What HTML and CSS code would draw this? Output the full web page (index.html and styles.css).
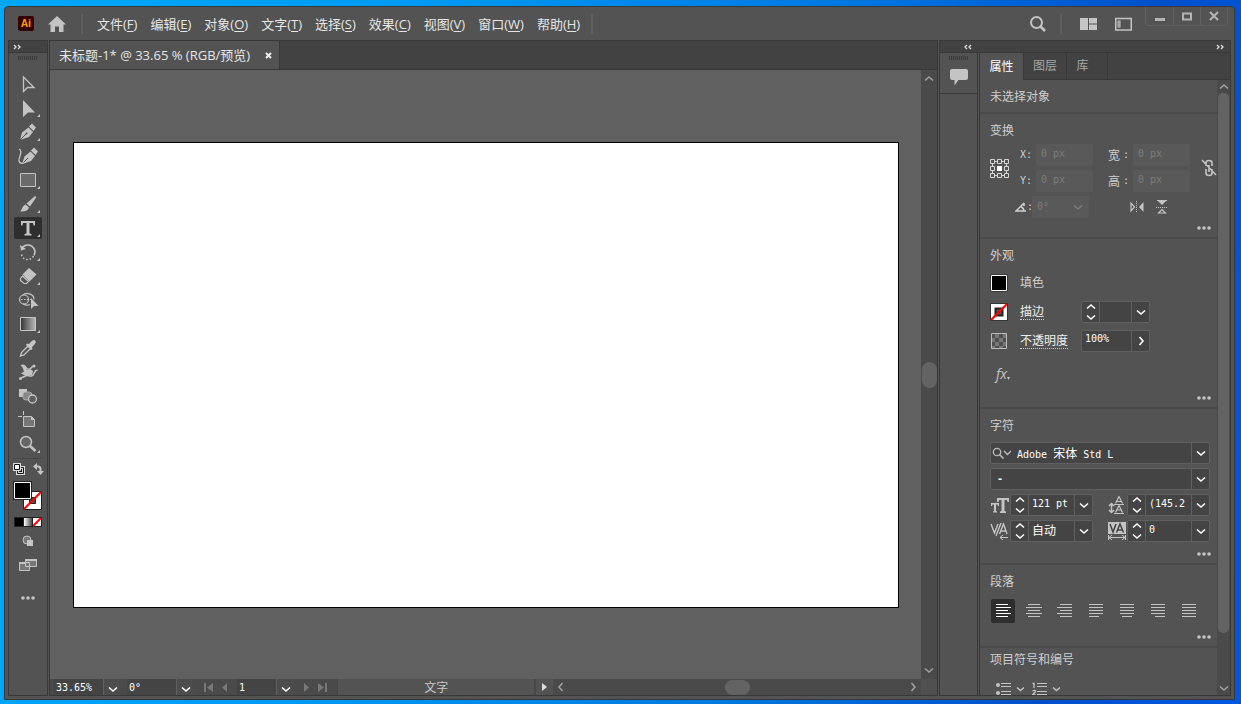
FILE: index.html
```html
<!DOCTYPE html>
<html lang="zh-CN">
<head>
<meta charset="utf-8">
<title>未标题-1*</title>
<link rel="stylesheet" href="styles.css">
</head>
<body>
<svg class="sprite" aria-hidden="true">
  <symbol id="down" viewBox="0 0 10 8"><path d="M1 2.500l4 3.500 4-3.500" fill="none" stroke="currentColor" stroke-width="1.600"/></symbol>
  <symbol id="up" viewBox="0 0 10 8"><path d="M1 5.500l4-3.500 4 3.500" fill="none" stroke="currentColor" stroke-width="1.600"/></symbol>
  <symbol id="right" viewBox="0 0 8 10"><path d="M2.500 1l3.500 4-3.500 4" fill="none" stroke="currentColor" stroke-width="1.600"/></symbol>
  <symbol id="left" viewBox="0 0 8 10"><path d="M5.500 1L2 5l3.500 4" fill="none" stroke="currentColor" stroke-width="1.600"/></symbol>
  <symbol id="dots" viewBox="0 0 14 4"><circle cx="2" cy="2" r="1.8"/><circle cx="7" cy="2" r="1.8"/><circle cx="12" cy="2" r="1.8"/></symbol>
  <symbol id="expand" viewBox="0 0 8 6"><path d="M1 1L3 3 1 5M5 1L7 3 5 5" fill="none" stroke="currentColor" stroke-width="1.300"/></symbol>
  <symbol id="collapse" viewBox="0 0 8 6"><path d="M3 1L1 3l2 2M7 1L5 3l2 2" fill="none" stroke="currentColor" stroke-width="1.300"/></symbol>
</svg>

<div class="window">
  <header class="titlebar">
    <svg class="logo" width="16" height="15" viewBox="0 0 16 15"><rect width="16" height="15" rx="2" fill="#330000"/><text x="8" y="11" text-anchor="middle" class="logo-text">Ai</text></svg>
    <button class="plain home" aria-label="主页"><svg width="18" height="16" viewBox="0 0 18 16"><path d="M9 0L18 8.500H15.500V16H11V10.500H7V16H2.500V8.500H0z"/></svg></button>
    <span class="divider"></span>
    <nav class="menu">
      <button>文件(<u>F</u>)</button><button>编辑(<u>E</u>)</button><button>对象(<u>O</u>)</button><button>文字(<u>T</u>)</button><button>选择(<u>S</u>)</button><button>效果(<u>C</u>)</button><button>视图(<u>V</u>)</button><button>窗口(<u>W</u>)</button><button>帮助(<u>H</u>)</button>
    </nav>
    <span class="divider"></span>
    <div class="title-tools">
      <button class="plain" aria-label="搜索"><svg width="18" height="18" viewBox="0 0 18 18" fill="none" stroke="currentColor"><circle cx="7.500" cy="7.500" r="5.500" stroke-width="2"/><path d="M11.500 11.500L16 16" stroke-width="2.600"/></svg></button>
      <span class="divider"></span>
      <button class="plain layout-button" aria-label="排列文档"><svg width="17" height="12" viewBox="0 0 17 12"><path d="M0 0h8v12H0zM9 0h8v5.500H9zM9 6.500h8V12H9z"/></svg></button>
      <button class="plain" aria-label="工作区"><svg width="17" height="14" viewBox="0 0 17 14"><path d="M.75 1.500h15.500v11.500H.75z" fill="none" stroke="currentColor" stroke-width="1.500"/><path d="M2.500 3.500h3v7h-3z"/><path d="M3.500 5h1M3.500 7h1M3.500 9h1" stroke="#535353"/></svg></button>
    </div>
    <div class="window-buttons">
      <button aria-label="最小化"><svg width="12" height="10" viewBox="0 0 12 10"><path d="M1 7h10v3H1z"/></svg></button>
      <button aria-label="最大化"><svg width="12" height="10" viewBox="0 0 12 10"><path d="M2 2.500h8v6H2z" fill="none" stroke="currentColor" stroke-width="2"/></svg></button>
      <button aria-label="关闭"><svg width="12" height="10" viewBox="0 0 12 10"><path d="M2 1l8 8M10 1L2 9" stroke="currentColor" stroke-width="2"/></svg></button>
    </div>
  </header>

  <div class="workspace">
    <aside class="toolbar">
      <div class="toolbar-head"><svg width="8" height="6"><use href="#expand"/></svg></div>
      <div class="grip"></div>
      <div class="tools">
        <button aria-label="选择"><svg viewBox="0 0 28 22"><path d="M9.500 4V18.500L13.500 14.500H20z" fill="none" stroke="currentColor" stroke-width="1.300"/></svg></button>
        <button aria-label="直接选择"><svg viewBox="0 0 28 22"><path d="M9 3V20l5-4.500h7z"/><path d="M26 17v3h-3z"/></svg></button>
        <button aria-label="钢笔"><svg viewBox="0 0 28 22"><path d="M6 19L8 11.500 14.500 6.500 19 11 15 16z"/><path d="M15 5.500L18 2.500 22 6.500 19.500 10z"/><path d="M6 19l6-6" stroke="#535353"/><circle cx="12.500" cy="12.500" r="1" fill="#535353"/><path d="M26 17v3h-3z"/></svg></button>
        <button aria-label="曲率"><svg viewBox="0 0 28 22"><path d="M8 19L10.500 11.500 16.500 6.500 21 11 17 16z"/><path d="M17 5.500L20 2.500 24 6.500 21.500 10z"/><path d="M9 18l5-5" stroke="#535353"/><path d="M5 4C10 6 4 13 5 16q1 4 7 1" fill="none" stroke="currentColor" stroke-width="1.300"/></svg></button>
        <button aria-label="矩形"><svg viewBox="0 0 28 22"><path d="M6.500 4.500h15v13h-15z" fill="#6b6b6b" stroke="currentColor"/><path d="M26 17v3h-3z"/></svg></button>
        <button aria-label="画笔"><svg viewBox="0 0 28 22"><path d="M21 3l1.500 1L16 13.500l-3.500-3z"/><path d="M11.500 11.500l3.500 3c-.8 3-4 4.500-9 4 2-1 2-5.500 5.500-7z"/><path d="M26 17v3h-3z"/></svg></button>
        <button class="active" aria-label="文字"><svg viewBox="0 0 28 22"><path d="M7 4h14v4.500h-1.500L19 6h-3.500v10.500l2 .5v1.500h-7V17l2-.5V6H9l-.5 2.500H7z"/><path d="M26 17v3h-3z"/></svg></button>
        <button aria-label="旋转"><svg viewBox="0 0 28 22"><path d="M8 7C11 3 17 3 20 7.500c1.500 2.500 1 5 0 7" fill="none" stroke="currentColor" stroke-width="1.500"/><path d="M6 4l1 5.500 5-1.500z"/><path d="M7.500 13.500C9 20 17 20 19.500 15" fill="none" stroke="currentColor" stroke-width="1.500" stroke-dasharray="1.500 2"/><path d="M26 17v3h-3z"/></svg></button>
        <button aria-label="橡皮擦"><svg viewBox="0 0 28 22"><path d="M15 3l7.500 6.500-7 7L8.500 9.500z"/><path d="M8.500 11L6.500 13.500v2l3.500 3h2.500l2-2z" fill="none" stroke="currentColor" stroke-width="1.200"/><path d="M26 17v3h-3z"/></svg></button>
        <button aria-label="形状生成器"><svg viewBox="0 0 28 22"><circle cx="10" cy="10.500" r="4.500" fill="none" stroke="currentColor" stroke-width="1.200"/><path d="M9 6c3-3 11-1.500 11 4.500M9 15q4 2 7 .5" fill="none" stroke="currentColor" stroke-width="1.200"/><path d="M7 10.500h10" stroke="currentColor" stroke-dasharray="1.500 1.500"/><path d="M17 9v11l3-3h4.500z"/></svg></button>
        <button aria-label="渐变"><svg viewBox="0 0 28 22"><defs><linearGradient id="g"><stop stop-color="#333"/><stop offset="1" stop-color="#bbb"/></linearGradient></defs><path d="M6.500 4.500h15v13h-15z" fill="url(#g)" stroke="currentColor"/><path d="M26 17v3h-3z"/></svg></button>
        <button aria-label="吸管"><svg viewBox="0 0 28 22"><path d="M14.500 8.500l-7 7-1 3.500 3.500-1 7-7" fill="none" stroke="currentColor" stroke-width="1.400"/><path d="M13 6.500l2 .5c2-2 3-4 5.500-4 2 1 1.500 3 0 4.500L18 10l.5 2-1.500 1-5-5z"/></svg></button>
        <button aria-label="操控变形"><svg viewBox="0 0 28 22"><path d="M7 5q3-2 5 1.500c1 2 2 2 4 1.500l3-3M23.500 9.500c-3-1.500-3 5-6 5.500-3 .5-4-1.500-6 0L7 17" fill="none" stroke="currentColor" stroke-width="1.500"/><path d="M7 4q5 1 6 5l4-.5 2 1.500-1 4-7 .5-4-2 3-2q-1-4-3-6.500z"/><circle cx="6.500" cy="17.500" r="1.500"/><circle cx="20" cy="5" r="1.500"/></svg></button>
        <button aria-label="混合"><svg viewBox="0 0 28 22"><path d="M5 4h8v8H5z"/><rect x="9" y="7" width="9" height="8" rx="3" fill="#888" stroke="#aaa"/><circle cx="18.500" cy="14" r="4" fill="#606060" stroke="currentColor" stroke-width="1.300"/></svg></button>
        <button aria-label="画板"><svg viewBox="0 0 28 22"><path d="M9.500 7.500h8l3 3v7h-11z" fill="#777" stroke="currentColor"/><path d="M9.500 2v4M4 7.500h4" stroke="currentColor"/><path d="M17 7l4 4h-4z"/></svg></button>
        <button aria-label="缩放"><svg viewBox="0 0 28 22"><circle cx="12" cy="9" r="5.500" fill="#666" stroke="currentColor" stroke-width="1.500"/><path d="M16 13l5.500 5" stroke="currentColor" stroke-width="2.500"/><path d="M26 17v3h-3z"/></svg></button>
      </div>
      <button class="plain" aria-label="填色和描边"><svg width="34" height="74" viewBox="0 0 34 74">
        <path d="M2 2.500h30" stroke="#484848"/>
        <path d="M6.500 11.500h6v6h-6z" fill="#111" stroke="#ddd" stroke-width="3"/><path d="M6.500 11.500h6v6h-6z" fill="none" stroke="#111"/><path d="M2.500 7.500h7v7h-7z" fill="#fff" stroke="#ddd"/><path d="M3.500 8.500h5v5h-5z" fill="#fff" stroke="#111"/>
        <path d="M25 10.500h2q2.500 0 2.500 2.500v4" fill="none" stroke="currentColor" stroke-width="2"/><path d="M22 10.500l4-3.500v7zM26 15h7l-3.500 4z"/>
        <path d="M12.500 35.500h18v18h-18z" fill="#fff" stroke="#222"/><path d="M18.500 41.500h6v6h-6z" fill="#535353" stroke="#222"/><path d="M13 53L30 36" stroke="#f00" stroke-width="2"/>
        <path d="M2.500 25.500h18v18h-18z" fill="#000" stroke="#222"/><path d="M3.500 26.500h16v16h-16z" fill="#000" stroke="#fff"/>
        <path d="M3 61h28v10H3z" fill="#222"/><path d="M4 62h8v8H4z" fill="#000"/><path d="M13 62h8v8h-8z" fill="url(#sg)"/><path d="M22 62h8v8h-8z" fill="#fff"/><path d="M22 70l8-8" stroke="#f00" stroke-width="2"/>
        <defs><linearGradient id="sg"><stop stop-color="#fff"/><stop offset="1" stop-color="#444"/></linearGradient></defs>
      </svg></button>
      <button class="plain mode" aria-label="绘图模式"><svg width="12" height="12" viewBox="0 0 12 12"><circle cx="5" cy="5" r="4" fill="#777" stroke="currentColor"/><path d="M5 5h6v6H5z"/></svg></button>
      <button class="plain screen" aria-label="屏幕模式"><svg width="18" height="14" viewBox="0 0 18 14"><path d="M.5 4.500h10v8H.5zM6.500 1.500h11v7h-11z" fill="#777" stroke="currentColor"/><path d="M6 1h12v2H6zM0 4h6v2H0z"/></svg></button>
      <button class="plain more-tools" aria-label="编辑工具栏"><svg width="14" height="4"><use href="#dots"/></svg></button>
    </aside>

    <main class="document">
      <div class="tabs"><div class="tab"><span>未标题-1* @ 33.65 % (RGB/预览)</span><button class="plain" aria-label="关闭标签"><svg width="7" height="7" viewBox="0 0 7 7"><path d="M1 1l5 5M6 1L1 6" stroke="#eee" stroke-width="2"/></svg></button></div></div>
      <div class="view">
        <div class="canvas"><div class="artboard"></div></div>
        <div class="scroll vertical"><svg width="10" height="8"><use href="#up"/></svg><span class="thumb"></span><svg width="10" height="8"><use href="#down"/></svg></div>
      </div>
      <footer class="status">
        <div class="status-combo"><input value="33.65%" aria-label="缩放比例"><button aria-label="缩放列表"><svg width="10" height="8"><use href="#down"/></svg></button></div>
        <div class="status-combo"><input value="0°" aria-label="旋转视图"><button aria-label="旋转列表"><svg width="10" height="8"><use href="#down"/></svg></button></div>
        <div class="pager"><button class="plain" aria-label="首项"><svg width="9" height="9" viewBox="0 0 9 9"><path d="M0 0h2v9H0zM9 0v9L3 4.500z"/></svg></button><button class="plain" aria-label="上一项"><svg width="5" height="9" viewBox="0 0 5 9"><path d="M5 0v9L0 4.500z"/></svg></button></div>
        <div class="status-combo short"><input value="1" aria-label="画板"><button aria-label="画板列表"><svg width="10" height="8"><use href="#down"/></svg></button></div>
        <div class="pager"><button class="plain" aria-label="下一项"><svg width="5" height="9" viewBox="0 0 5 9"><path d="M0 0v9l5-4.500z"/></svg></button><button class="plain" aria-label="末项"><svg width="9" height="9" viewBox="0 0 9 9"><path d="M7 0h2v9H7zM0 0v9l6-4.500z"/></svg></button></div>
        <div class="status-text">文字</div>
        <button class="plain play" aria-label="状态菜单"><svg width="5" height="8" viewBox="0 0 5 8"><path d="M0 0v8l5-4z"/></svg></button>
        <div class="scroll horizontal"><svg width="8" height="10"><use href="#left"/></svg><span class="thumb"></span><svg width="8" height="10"><use href="#right"/></svg></div>
        <span class="corner"></span>
      </footer>
    </main>

    <section class="dock">
      <div class="dock-head"><svg width="8" height="6"><use href="#collapse"/></svg><svg width="8" height="6"><use href="#expand"/></svg></div>
      <div class="dock-body">
        <div class="strip"><div class="strip-group"><div class="grip"></div><button class="plain" aria-label="注释"><svg width="18" height="18" viewBox="0 0 18 18"><path d="M2 1h14q2 0 2 2v7q0 2-2 2H8.500l-4 5.500V12H2q-2 0-2-2V3q0-2 2-2z"/></svg></button></div></div>
        <div class="properties">
          <div class="panel-tabs"><button class="on">属性</button><button>图层</button><button>库</button></div>
          <div class="panel-view">
            <div class="panel-content">
              <section><h2>未选择对象</h2><div class="end"></div></section>
              <section>
                <h2>变换</h2>
                <div class="transform">
                  <svg class="ref" width="19" height="19" viewBox="0 0 19 19"><g fill="none" stroke="#d6d6d6"><path d="M2.500 2.500h14v14h-14z"/><g fill="#535353"><path d="M.5.500h4v4h-4zM7.500.500h4v4h-4zM14.500.500h4v4h-4zM.5 7.500h4v4h-4zM14.500 7.500h4v4h-4zM.5 14.500h4v4h-4zM7.500 14.500h4v4h-4zM14.500 14.500h4v4h-4z"/></g></g><path d="M7 7h5v5H7z" fill="#fff"/></svg>
                  <label for="tx">X:</label><input id="tx" value="0 px" disabled>
                  <label for="tw" class="wide"><b>宽</b>:</label><input id="tw" value="0 px" disabled>
                  <svg class="link" width="16" height="18" viewBox="0 0 16 18"><path d="M5 7V4q0-2.500 3-2.500T11 4v3M5 10v4q0 2.500 3 2.500T11 14v-4M8 6v7M1 1l14 15" fill="none" stroke="currentColor" stroke-width="1.600"/></svg>
                  <label for="ty">Y:</label><input id="ty" value="0 px" disabled>
                  <label for="th" class="wide"><b>高</b>:</label><input id="th" value="0 px" disabled>
                  <div class="angle"><label for="ta" aria-label="角度"><svg width="12" height="10" viewBox="0 0 12 10"><path d="M9 1L1 9h10M5.500 4.500q3 1 3.500 4.500M9 1v3" fill="none" stroke="currentColor" stroke-width="1.500"/></svg>:</label><div class="pick"><select id="ta" disabled><option>0°</option></select><svg width="10" height="8"><use href="#down"/></svg></div></div>
                  <div class="flips"><button class="plain" aria-label="水平翻转"><svg width="14" height="12" viewBox="0 0 14 12"><path d="M1 2v8l3.500-4z" fill="none" stroke="currentColor" stroke-width="1.200"/><path d="M13.500 1v10L9 6z"/><path d="M6.500 0v12" stroke="currentColor" stroke-dasharray="1 1"/></svg></button><button class="plain" aria-label="垂直翻转"><svg width="12" height="14" viewBox="0 0 12 14"><path d="M1 0h10L6 5zM1 0h10v1H1z"/><path d="M2.500 13h7L6 9.500z" fill="none" stroke="currentColor" stroke-width="1.200"/><path d="M0 7.500h12" stroke="currentColor" stroke-dasharray="1 1"/></svg></button></div>
                </div>
                <div class="more"><button class="plain" aria-label="更多变换"><svg width="14" height="4"><use href="#dots"/></svg></button></div>
              </section>
              <section>
                <h2>外观</h2>
                <div class="look">
                  <div class="look-row"><svg width="18" height="18" viewBox="0 0 18 18"><path d="M.5.500h17v17H.500z" fill="#222"/><path d="M1.500 1.500h15v15h-15z" fill="#000" stroke="#fff"/></svg><span>填色</span></div>
                  <div class="look-row"><svg width="18" height="18" viewBox="0 0 18 18"><path d="M0 0h18v18H0z" fill="#333"/><path d="M1 1h16v16H1z" fill="#fff"/><path d="M5.500 5.500h7v7h-7z" fill="#535353" stroke="#222" stroke-width="2"/><path d="M1 17L17 1" stroke="#f00" stroke-width="2.200"/></svg><label for="sw">描边</label>
                    <div class="combo"><div class="spin"><button aria-label="增加"><svg width="10" height="8"><use href="#up"/></svg></button><button aria-label="减少"><svg width="10" height="8"><use href="#down"/></svg></button></div><input id="sw" value=""><button class="drop" aria-label="描边粗细列表"><svg width="10" height="8"><use href="#down"/></svg></button></div></div>
                  <div class="look-row"><svg width="18" height="18" viewBox="0 0 18 18"><path d="M1.500 1.500h15v15h-15z" fill="#777" stroke="#bbb"/><path d="M2 2h3v4H2zM9 2h4v4H9zM5 6h4v4H5zM13 6h3v4h-3zM2 10h3v4H2zM9 10h4v4H9zM5 14h4v2H5zM13 14h3v2h-3z" fill="#505050"/></svg><label for="op">不透明度</label>
                    <div class="combo"><input id="op" value="100%"><button class="drop" aria-label="不透明度滑块"><svg width="8" height="10"><use href="#right"/></svg></button></div></div>
                </div>
                <button class="plain fx" aria-label="效果"><i>fx</i><svg width="3" height="3" viewBox="0 0 3 3"><path d="M0 0h3L1.500 3z"/></svg></button>
                <div class="more"><button class="plain" aria-label="更多外观"><svg width="14" height="4"><use href="#dots"/></svg></button></div>
              </section>
              <section>
                <h2>字符</h2>
                <div class="type">
                  <div class="combo full"><svg class="find" width="20" height="12" viewBox="0 0 20 12"><g fill="none" stroke="#bbb"><circle cx="5" cy="5" r="3.700" stroke-width="1.300"/><path d="M7.500 7.500l4 4" stroke-width="1.700"/><path d="M12 4l3.500 3.500L19 4" stroke-width="1.400"/></g></svg><div class="font-name" role="textbox" aria-label="字体">Adobe <span>宋体</span> Std L</div><button class="drop" aria-label="字体列表"><svg width="10" height="8"><use href="#down"/></svg></button></div>
                  <div class="combo full"><input class="bold" value="-" aria-label="字体样式"><button class="drop" aria-label="样式列表"><svg width="10" height="8"><use href="#down"/></svg></button></div>
                  <div class="metric"><svg width="20" height="18" viewBox="0 0 20 18"><path d="M7 2h12v4h-1.500l-.5-2h-2.500v11l1.500.5V17h-6v-1.500l1.500-.5V4H9l-.5 2H7z"/><path d="M1 7h8v3H8l-.5-1.500H6V15l1 .5v1H3v-1l1-.5V8.500H2.500L2 10H1z"/></svg>
                    <div class="combo"><div class="spin"><button aria-label="增加"><svg width="10" height="8"><use href="#up"/></svg></button><button aria-label="减少"><svg width="10" height="8"><use href="#down"/></svg></button></div><input value="121 pt" aria-label="字体大小"><button class="drop" aria-label="大小列表"><svg width="10" height="8"><use href="#down"/></svg></button></div></div>
                  <div class="metric"><svg width="20" height="18" viewBox="0 0 20 18" fill="none" stroke="currentColor"><path d="M4.500 8v8M2 10l2.500-2.500L7 10M2 14l2.500 2.500L7 14" stroke-width="1.500"/><path d="M8.500 7.500l3.500-7 3.500 7M10 5.500h4M8.500 16.500l3.500-7 3.500 7M10 14h4" stroke-width="1.200"/><path d="M7 8.500h10M7 17.500h10"/></svg>
                    <div class="combo"><div class="spin"><button aria-label="增加"><svg width="10" height="8"><use href="#up"/></svg></button><button aria-label="减少"><svg width="10" height="8"><use href="#down"/></svg></button></div><input value="(145.2" aria-label="行距"><button class="drop" aria-label="行距列表"><svg width="10" height="8"><use href="#down"/></svg></button></div></div>
                  <div class="metric"><svg width="20" height="18" viewBox="0 0 20 18" fill="none" stroke="currentColor"><path d="M1 2l3.500 9L8 2M11 1L6 14M9.500 12L13.500 2l3.500 10M11 9h5" stroke-width="1.400"/><path d="M10 15.500h8M13 13l-3 2.500 3 2.500"/></svg>
                    <div class="combo"><div class="spin"><button aria-label="增加"><svg width="10" height="8"><use href="#up"/></svg></button><button aria-label="减少"><svg width="10" height="8"><use href="#down"/></svg></button></div><input class="cjk" value="自动" aria-label="字偶间距"><button class="drop" aria-label="字偶间距列表"><svg width="10" height="8"><use href="#down"/></svg></button></div></div>
                  <div class="metric"><svg width="20" height="18" viewBox="0 0 20 18"><path d="M1 0h18v12H1z"/><path d="M3 2l3 8 3-8M9.500 10.500L13 2l3.500 8.500M11 8h4" fill="none" stroke="#444" stroke-width="1.500"/><path d="M2 15.500h16M5 13l-3 2.500L5 18M15 13l3 2.500-3 2.500M1.500 13v5M18.500 13v5" fill="none" stroke="currentColor"/></svg>
                    <div class="combo"><div class="spin"><button aria-label="增加"><svg width="10" height="8"><use href="#up"/></svg></button><button aria-label="减少"><svg width="10" height="8"><use href="#down"/></svg></button></div><input value="0" aria-label="字符间距"><button class="drop" aria-label="字符间距列表"><svg width="10" height="8"><use href="#down"/></svg></button></div></div>
                </div>
                <div class="more"><button class="plain" aria-label="更多字符"><svg width="14" height="4"><use href="#dots"/></svg></button></div>
              </section>
              <section>
                <h2>段落</h2>
                <div class="aligns">
                  <button class="on" aria-label="左对齐"><svg viewBox="0 0 24 24"><path d="M5 5.500h12M5 8.500h15M5 11.500h12M5 14.500h15M5 17.500h12"/></svg></button>
                  <button aria-label="居中对齐"><svg viewBox="0 0 24 24"><path d="M6 5.500h12M4 8.500h16M6 11.500h12M4 14.500h16M6 17.500h12"/></svg></button>
                  <button aria-label="右对齐"><svg viewBox="0 0 24 24"><path d="M7 5.500h12M4 8.500h15M7 11.500h12M4 14.500h15M7 17.500h12"/></svg></button>
                  <button aria-label="末行左对齐"><svg viewBox="0 0 24 24"><path d="M5 5.500h14M5 8.500h14M5 11.500h14M5 14.500h14M5 17.500h10"/></svg></button>
                  <button aria-label="末行居中"><svg viewBox="0 0 24 24"><path d="M5 5.500h14M5 8.500h14M5 11.500h14M5 14.500h14M7 17.500h10"/></svg></button>
                  <button aria-label="末行右对齐"><svg viewBox="0 0 24 24"><path d="M5 5.500h14M5 8.500h14M5 11.500h14M5 14.500h14M9 17.500h10"/></svg></button>
                  <button aria-label="全部对齐"><svg viewBox="0 0 24 24"><path d="M5 5.500h14M5 8.500h14M5 11.500h14M5 14.500h14M5 17.500h14"/></svg></button>
                </div>
                <div class="more"><button class="plain" aria-label="更多段落"><svg width="14" height="4"><use href="#dots"/></svg></button></div>
              </section>
              <section class="bullets">
                <h2>项目符号和编号</h2>
                <div class="lists">
                  <button class="plain" aria-label="项目符号"><svg width="28" height="18" viewBox="0 0 28 18"><circle cx="2" cy="3" r="2"/><circle cx="2" cy="11" r="2"/><path d="M5 1.500h10M5 4.500h10M5 9.500h10M5 12.500h10" stroke="currentColor"/><path d="M21 5.500l3.500 3 3.500-3" fill="none" stroke="currentColor" stroke-width="1.500"/></svg></button>
                  <button class="plain" aria-label="编号"><svg width="28" height="18" viewBox="0 0 28 18"><path d="M.500 1.500h1.500V6M.500 9q3-1.500 3 .5l-3 3.500h3.500" fill="none" stroke="currentColor" stroke-width="1.300"/><path d="M5 1.500h10M5 4.500h10M5 9.500h10M5 12.500h10" stroke="currentColor"/><path d="M21 5.500l3.500 3 3.500-3" fill="none" stroke="currentColor" stroke-width="1.500"/></svg></button>
                </div>
              </section>
            </div>
            <div class="scroll panel"><svg width="10" height="8"><use href="#up"/></svg><span class="thumb"></span><svg width="10" height="8"><use href="#down"/></svg></div>
          </div>
        </div>
      </div>
    </section>
  </div>
</div>
</body>
</html>
```

FILE: styles.css
```css
:root {
  --panel: #535353;
  --dark: #424242;
  --line: #383838;
  --field: #444444;
  --edge: #606060;
  --icon: #c4c4c4;
  --mono: "DejaVu Sans Mono", "Noto Sans CJK SC", monospace;
}
* { box-sizing: border-box; }
body {
  margin: 0;
  height: 100vh;
  padding: 6px 6px 4px 4px;
  overflow: hidden;
  display: flex;
  background: linear-gradient(100deg, #00a8fb, #009af4 30%, #0078e0 62%, #0050cc 85%, #0058e0);
  font: 12px/18px "Open Sans", "Noto Sans CJK SC", sans-serif;
  color: #e6e6e6;
}
svg { display: block; flex: none; }
svg:not([fill]) { fill: currentColor; }
.sprite { position: absolute; width: 0; height: 0; }
button, input, select { font: inherit; color: inherit; margin: 0; padding: 0; border: 0; background: none; border-radius: 0; }
input { width: 0; min-width: 0; outline: 0; }
.plain { display: flex; align-items: center; justify-content: center; color: var(--icon); }

.window {
  flex: 1;
  min-width: 0;
  display: flex;
  flex-direction: column;
  background: var(--panel);
  border: 1px solid var(--line);
  border-radius: 4px 4px 0 0;
}

/* Title bar */
.titlebar { flex: none; height: 33px; display: flex; align-items: center; padding: 0 6px 0 13px; }
.logo-text { font: bold 10px "Open Sans", sans-serif; fill: #ff9a00; }
.home { margin: 0 15px 0 14px; }
.divider { width: 2px; height: 20px; background: #5e5e5e; }
.menu { display: flex; gap: 13px; padding: 0 11px 0 14px; font-size: 13px; white-space: nowrap; }
.menu u { text-underline-offset: 2px; }
.title-tools { flex: 1; display: flex; align-items: center; justify-content: flex-end; gap: 18px; padding-right: 13px; }
.title-tools .divider { margin-left: -5px; }
.window-buttons { align-self: flex-start; display: flex; height: 19px; border: 1px solid var(--edge); border-top: 0; border-radius: 0 0 4px 4px; }
.window-buttons button { width: 27px; display: flex; align-items: center; justify-content: center; color: #b4b4b4; }
.window-buttons button + button { border-left: 1px solid var(--edge); }

.workspace { flex: 1; min-height: 0; display: flex; gap: 1px; padding: 0 3px 3px; }
.grip { width: 20px; height: 4px; background: repeating-linear-gradient(90deg, #383838 0 1px, transparent 1px 2px); }

/* Tools */
.toolbar { flex: none; width: 40px; display: flex; flex-direction: column; align-items: center; border: 1px solid var(--line); }
.toolbar-head { align-self: stretch; height: 12px; padding: 3px 4px; background: var(--dark); border-bottom: 1px solid var(--line); color: #ddd; }
.toolbar > .grip { margin: 3px 0 13px; }
.tools { display: flex; flex-direction: column; gap: 2px; margin-bottom: 1px; }
.tools button { width: 28px; height: 22px; color: var(--icon); border-radius: 2px; }
.tools .active { background: #2e2e2e; }
.mode { margin-top: 5px; }
.screen { margin-top: 11px; }
.more-tools { margin-top: 24px; }

/* Document */
.document { flex: 1; min-width: 0; display: flex; flex-direction: column; border: 1px solid var(--line); }
.tabs { height: 29px; display: flex; background: var(--dark); border-bottom: 1px solid var(--line); }
.tab { display: flex; align-items: center; gap: 15px; padding: 0 7px 0 9px; background: var(--panel); border-right: 1px solid var(--line); font-size: 13px; white-space: nowrap; }
.view { flex: 1; min-height: 0; display: flex; }
.canvas { flex: 1; display: flex; padding: 72px 22px 71px 23px; background: #606060; }
.artboard { flex: 1; background: #fff; border: 1px solid #000; }
.scroll { display: flex; align-items: center; justify-content: space-between; background: #4a4a4a; color: #a0a0a0; }
.thumb { background: #636363; border-radius: 8px; }
.vertical { width: 16px; flex-direction: column; padding: 5px 0; }
.vertical .thumb { width: 15px; height: 26px; }
.horizontal { flex: 366; min-width: 0; padding: 0 4px; }
.horizontal .thumb { width: 25px; height: 15px; }

.status { height: 16px; display: flex; background: #4a4a4a; }
.status-combo { display: flex; width: 67px; margin-left: 4px; background: var(--field); font: 10px/16px var(--mono); color: #fff; }
.status-combo input { flex: 1; padding: 1px 0 0 2px; height: 16px; }
.status-combo button { width: 18px; display: flex; align-items: center; justify-content: center; padding-top: 3px; border-left: 1px solid var(--edge); background: #4c4c4c; }
.status-combo:nth-child(2) { margin-left: 6px; }
.status-combo.short { width: 57px; margin: 0; }
.pager { width: 43px; display: flex; align-items: center; justify-content: center; gap: 9px; }
.pager .plain { color: #777; }
.status-text { flex: 200; background: var(--panel); border: solid #484848; border-width: 0 2px 0 1px; text-align: center; line-height: 18px; color: #c8c8c8; }
.play { width: 17px; background: var(--panel); color: #ddd; }
.corner { width: 16px; background: #505050; }

/* Panel dock */
.dock { flex: none; width: 292px; display: flex; flex-direction: column; border: 1px solid var(--line); }
.dock-head { height: 12px; display: flex; justify-content: space-between; padding: 3px 6px 3px 24px; background: var(--dark); border-bottom: 1px solid var(--line); color: #ddd; }
.dock-body { flex: 1; min-height: 0; display: flex; gap: 1px; }
.strip { width: 38px; border-right: 1px solid var(--line); }
.strip-group { height: 41px; display: flex; flex-direction: column; align-items: center; gap: 8px; padding-top: 3px; border-bottom: 1px solid var(--line); }
.properties { flex: 1; min-width: 0; display: flex; flex-direction: column; border-left: 1px solid var(--line); }
.panel-tabs { height: 27px; display: flex; background: var(--dark); color: #a6a6a6; }
.panel-tabs button { width: 43px; border: solid var(--line); border-width: 0 1px 1px 0; }
.panel-tabs button:last-child { width: 41px; padding-right: 9px; }
.panel-tabs::after { content: ""; flex: 1; border-bottom: 1px solid var(--line); }
.panel-tabs .on { width: 44px; background: var(--panel); border-bottom: 0; color: #fff; }
.panel-view { flex: 1; min-height: 0; display: flex; }
.panel-content { flex: 1; min-width: 0; overflow: hidden; color: #cfcfcf; }
.panel-content section { padding: 8px 8px 0 10px; border-bottom: 2px solid #4a4a4a; }
.panel-content h2 { margin: 0; font: inherit; }
.end { height: 6px; }
.panel { flex: none; width: 13px; flex-direction: column; padding: 3px 0; }
.panel .thumb { width: 11px; flex: 540; margin: 2px 0 51px; border-radius: 5px; }
.more { height: 19px; display: flex; justify-content: flex-end; padding-right: 6px; margin-right: -8px; }

.transform { margin-top: 4px; display: grid; grid-template-columns: 30px 16px 57px 15px 25px 57px 1fr; grid-auto-rows: 22px; row-gap: 4px; align-items: center; font: 10px/22px var(--mono); }
.transform .ref, .transform .link { grid-row: 1 / 3; }
.transform .ref { grid-column: 1; }
.transform .link { grid-column: 7; justify-self: end; margin-right: -8px; color: var(--icon); }
.transform .wide { grid-column: 5; display: flex; gap: 3px; }
.transform .wide b { font: 12px/22px "Noto Sans CJK SC", sans-serif; }
.transform input, .pick { width: 57px; height: 22px; background: #595959; border-radius: 2px; color: #7c7c7c; }
.transform input { padding: 0 0 3px 5px; }
.angle { grid-column: 1 / 4; display: flex; padding-left: 25px; gap: 0; }
.angle label { display: flex; align-items: center; width: 17px; flex: none; }
.pick { position: relative; }
.pick select { width: 57px; height: 18px; padding-left: 5px; appearance: none; opacity: 1; }
.pick svg { position: absolute; right: 6px; top: 7px; pointer-events: none; }
.flips { grid-column: 5 / 8; display: flex; gap: 12px; padding-left: 22px; }

.look { margin-top: 3px; }
.look-row { height: 29px; display: grid; grid-template-columns: 30px 61px 69px; align-items: center; }
.look-row label { justify-self: start; line-height: 15px; color: #eee; border-bottom: 1px dotted #ccc; white-space: nowrap; }
.combo { display: flex; min-width: 0; height: 22px; border: 1px solid var(--edge); border-radius: 2px; background: var(--field); font: 10px/20px var(--mono); color: #fff; }
.combo input { flex: 1; padding: 0 0 3px 3px; }
.combo .bold { font-weight: bold; padding: 0 0 0 6px; }
.combo .cjk { font: 12px/20px "Noto Sans CJK SC", sans-serif; }
.drop { flex: none; width: 18px; display: flex; align-items: center; justify-content: center; border-left: 1px solid var(--edge); }
.spin { flex: none; width: 18px; display: flex; flex-direction: column; justify-content: center; gap: 2px; align-items: center; border-right: 1px solid var(--edge); }
.fx { width: 26px; height: 33px; padding-top: 5px; font-size: 14px; }
.fx svg { margin-top: 8px; }

.type { margin: 7px 0 2px; display: grid; grid-template-columns: 103px 103px; column-gap: 14px; row-gap: 4px; }
.full { grid-column: 1 / 3; }
.find { margin: 4px 0 0 1px; }
.font-name { flex: 1; padding-left: 5px; white-space: pre; }
.font-name span { font: 12px/20px "Noto Sans CJK SC", sans-serif; }
.metric { display: flex; align-items: center; color: var(--icon); }
.metric .combo { flex: 1; }

.aligns { margin: 8px 0 4px 1px; display: flex; gap: 7px; }
.aligns button { width: 24px; height: 24px; border-radius: 2px; color: var(--icon); }
.aligns svg { stroke: currentColor; }
.aligns .on { background: #2e2e2e; color: #fff; }
.panel-content .bullets { padding-top: 3px; border: 0; }
.lists { display: flex; gap: 8px; padding: 13px 0 0 6px; }
```
